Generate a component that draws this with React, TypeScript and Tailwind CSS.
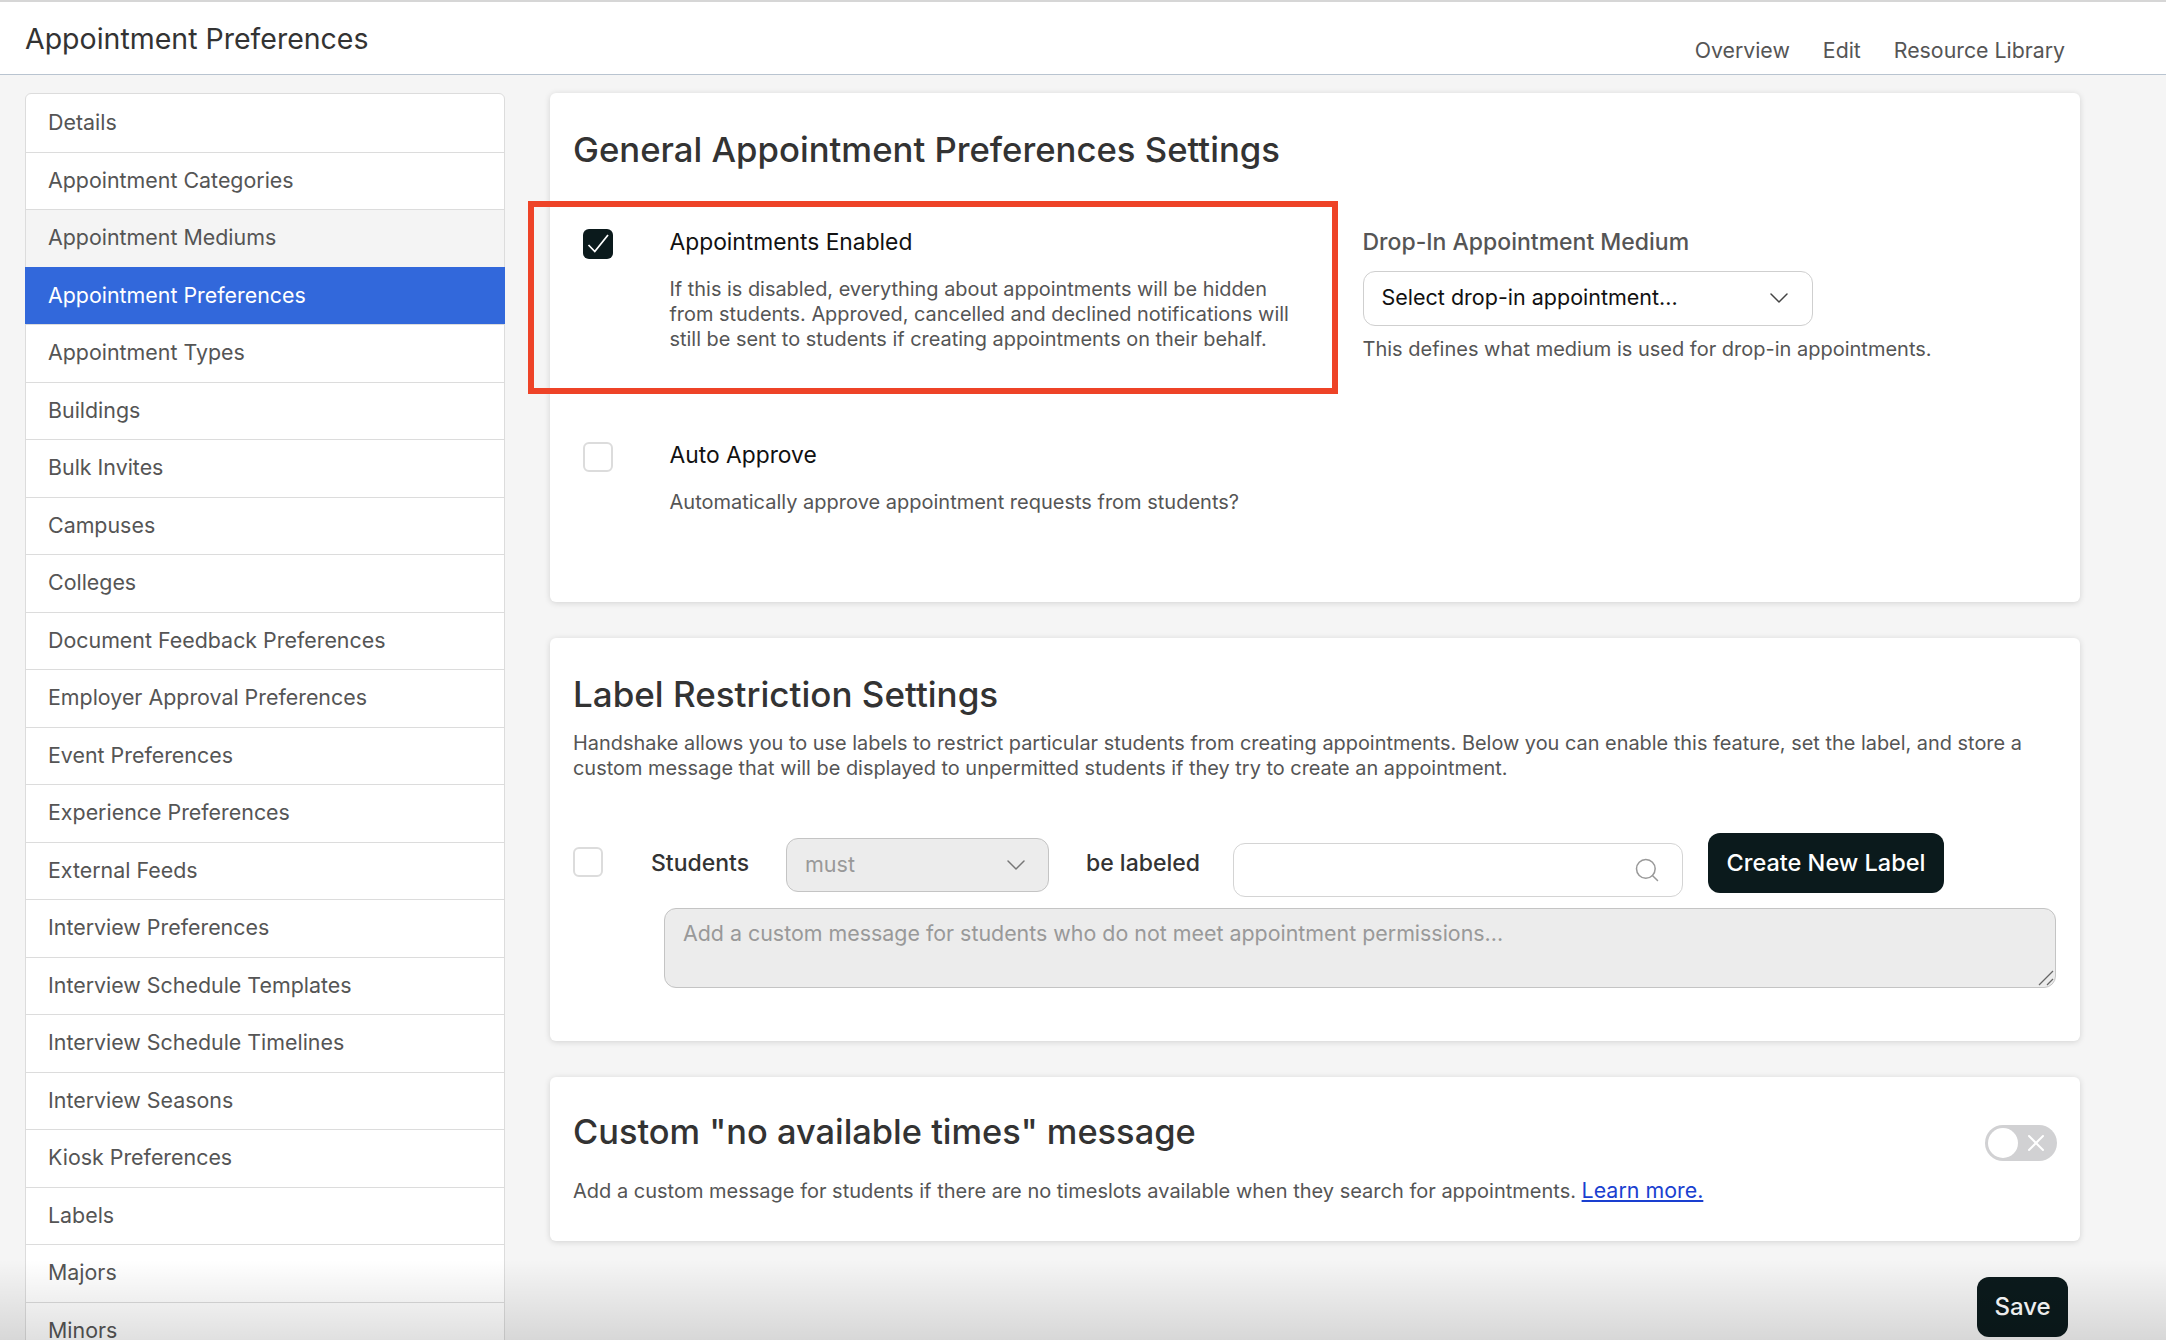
import { ChevronDown, Search, X } from "lucide-react";

const sidebarItems = [
  "Details",
  "Appointment Categories",
  "Appointment Mediums",
  "Appointment Preferences",
  "Appointment Types",
  "Buildings",
  "Bulk Invites",
  "Campuses",
  "Colleges",
  "Document Feedback Preferences",
  "Employer Approval Preferences",
  "Event Preferences",
  "Experience Preferences",
  "External Feeds",
  "Interview Preferences",
  "Interview Schedule Templates",
  "Interview Schedule Timelines",
  "Interview Seasons",
  "Kiosk Preferences",
  "Labels",
  "Majors",
  "Minors",
];

function Checkbox({ checked = false }: { checked?: boolean }) {
  if (checked) {
    return (
      <div className="w-[30px] h-[30px] shrink-0 rounded-[6px] bg-[#0b1a1c]">
        <svg width="30" height="30" viewBox="0 0 30 30" fill="none" stroke="#fff" strokeWidth="1.75">
          <path d="M5.5 16 L11.8 22.5 L25 6" />
        </svg>
      </div>
    );
  }
  return <div className="w-[30px] h-[30px] shrink-0 rounded-[6px] border-2 border-[#dcdcdc] bg-white" />;
}

function Card({ className, children }: { className: string; children: React.ReactNode }) {
  return (
    <section className={`bg-white rounded-[6px] shadow-[0_1px_6px_rgba(0,0,0,0.14)] px-[23px] ${className}`}>
      {children}
    </section>
  );
}

export default function App() {
  return (
    <div className="relative h-[1340px] w-[2166px] overflow-hidden bg-[#f5f5f5] font-['Inter',sans-serif] text-[#555]">
      {/* Top bar */}
      <header className="h-[75px] border-t-2 border-b border-t-[#d6d6d6] border-b-[#b9c4d0] bg-white flex justify-between pl-[25px] pr-[101px]">
        <h1 className="text-[28.5px] leading-none text-[#333] pt-[23px]">Appointment Preferences</h1>
        <nav className="flex gap-[33px] text-[21.3px] leading-none pt-[38px]">
          <span>Overview</span>
          <span>Edit</span>
          <span>Resource Library</span>
        </nav>
      </header>

      <div className="flex gap-[45px] pl-[25px] pt-[18px]">
        {/* Sidebar */}
        <aside className="w-[480px] shrink-0 h-fit rounded-t-[6px] border border-[#dcdcdc] bg-white">
          {sidebarItems.map((item) => (
            <div
              key={item}
              className={
                item === "Appointment Preferences"
                  ? "h-[57.5px] flex items-center pl-[23px] pb-px -mx-px bg-[#3268db] text-white text-[21.4px]"
                  : item === "Appointment Mediums"
                    ? "h-[57.5px] flex items-center pl-[22px] pb-[2px] bg-[#f4f4f4] border-t border-[#dcdcdc] text-[21.4px]"
                    : "h-[57.5px] flex items-center pl-[22px] pb-[2px] border-t first:border-t-0 border-[#dcdcdc] text-[21.4px]"
              }
            >
              {item}
            </div>
          ))}
        </aside>

        {/* Settings */}
        <main className="w-[1530px] shrink-0 flex flex-col gap-[36px]">
          <Card className="h-[509px] pt-[35px]">
            <h2 className="text-[34.7px] leading-[42px] font-medium text-[#333]">General Appointment Preferences Settings</h2>
            <div className="flex mt-[59px]">
              <div className="relative w-[789.5px] shrink-0">
                {/* red annotation */}
                <div className="absolute left-[-45px] top-[-28px] w-[810px] h-[193px] border-[6px] border-[#ee4327]" />
                <div className="flex pl-[10px]">
                  <Checkbox checked />
                  <div className="ml-[56.5px]">
                    <div className="text-[22.8px] leading-[26px] text-[#111]">Appointments Enabled</div>
                    <p className="mt-[22px] text-[19.9px] leading-[25px]">
                      If this is disabled, everything about appointments will be hidden
                      <br />
                      from students. Approved, cancelled and declined notifications will
                      <br />
                      still be sent to students if creating appointments on their behalf.
                    </p>
                  </div>
                </div>
                <div className="flex pl-[10px] mt-[90px]">
                  <Checkbox />
                  <div className="ml-[56.5px]">
                    <div className="text-[22.8px] leading-[26px] text-[#111]">Auto Approve</div>
                    <p className="mt-[22px] text-[20px] leading-[25px]">
                      Automatically approve appointment requests from students?
                    </p>
                  </div>
                </div>
              </div>
              <div>
                <div className="text-[23px] leading-[26px] font-medium">Drop-In Appointment Medium</div>
                <div className="mt-[16px] w-[450.5px] h-[55px] rounded-[12px] border border-[#cfcfcf] flex items-center justify-between pl-[18px] pr-[17px] pb-[2px] text-[21.5px] text-[#111]">
                  <span>Select drop-in appointment...</span>
                  <ChevronDown className="w-[32px] h-[32px] text-[#444]" strokeWidth={1.1} />
                </div>
                <p className="mt-[11px] text-[20px] leading-[25px]">This defines what medium is used for drop-in appointments.</p>
              </div>
            </div>
          </Card>

          <Card className="h-[403px] pt-[35px]">
            <h2 className="text-[35px] leading-[42px] font-medium text-[#333]">Label Restriction Settings</h2>
            <p className="mt-[16px] text-[19.92px] leading-[25px]">
              Handshake allows you to use labels to restrict particular students from creating appointments. Below you can enable this feature, set the label, and store a
              <br />
              custom message that will be displayed to unpermitted students if they try to create an appointment.
            </p>
            <div className="flex items-start mt-[52px]">
              <div className="mt-[14px]">
                <Checkbox />
              </div>
              <span className="ml-[48px] mt-[17px] w-[135px] text-[23px] leading-[26px] font-medium text-[#333]">Students</span>
              <div className="mt-[5px] w-[263px] h-[54px] rounded-[12px] border border-[#c4c4c4] bg-[#ececec] flex items-center justify-between pl-[18px] pr-[16px] text-[21.5px] text-[#999]">
                <span className="pb-[2px]">must</span>
                <ChevronDown className="w-[32px] h-[32px] text-[#777]" strokeWidth={1.1} />
              </div>
              <span className="ml-[37px] mt-[17px] w-[147px] text-[23px] leading-[26px] font-medium text-[#333]">be labeled</span>
              <div className="mt-[10px] w-[450px] h-[54px] rounded-[12px] border border-[#d4d4d4] flex items-center justify-end pr-[21px]">
                <Search className="w-[28px] h-[28px] text-[#999]" strokeWidth={1.3} />
              </div>
              <button className="ml-[25px] w-[236px] h-[60px] rounded-[12px] bg-[#0b1a1c] text-white text-[23.5px] font-medium">
                Create New Label
              </button>
            </div>
            <div className="ml-[91px] mt-[11px] w-[1392px] h-[80px] rounded-[12px] border border-[#c4c4c4] bg-[#ececec] relative pl-[18px] pt-[11px] text-[21.4px] leading-[26px] text-[#999]">
              Add a custom message for students who do not meet appointment permissions...
              <svg className="absolute right-[1px] bottom-[1px]" width="16" height="16" viewBox="0 0 16 16" fill="none" stroke="#666" strokeWidth="1.2">
                <path d="M1 15 L15 1" />
                <path d="M9 15 L15 9" />
              </svg>
            </div>
          </Card>

          <Card className="h-[164px] pt-[34px] relative">
            <div className="flex justify-between">
              <h2 className="text-[34.4px] leading-[42px] font-medium text-[#333]">Custom "no available times" message</h2>
              <div className="mt-[14px] w-[72px] h-[36px] rounded-full bg-[#d1d1d3] flex items-center justify-between pl-[3px] pr-[7px]">
                <div className="w-[30px] h-[30px] rounded-full bg-white" />
                <X className="w-[28px] h-[28px] text-white" strokeWidth={1.7} />
              </div>
            </div>
            <p className="mt-[17px] text-[20px] leading-[25px]">
              Add a custom message for students if there are no timeslots available when they search for appointments.{" "}
              <a className="text-[#1a3fd0] underline text-[21.4px]">Learn more.</a>
            </p>
          </Card>

          <div className="flex justify-end pr-[12px]">
            <button className="w-[91px] h-[60px] rounded-[12px] bg-[#0b1a1c] text-white text-[24px] font-medium">Save</button>
          </div>
        </main>
      </div>

      {/* bottom fade over the page */}
      <div className="absolute left-0 right-0 bottom-0 h-[80px] pointer-events-none bg-gradient-to-b from-transparent to-[#0000001f]" />
    </div>
  );
}
